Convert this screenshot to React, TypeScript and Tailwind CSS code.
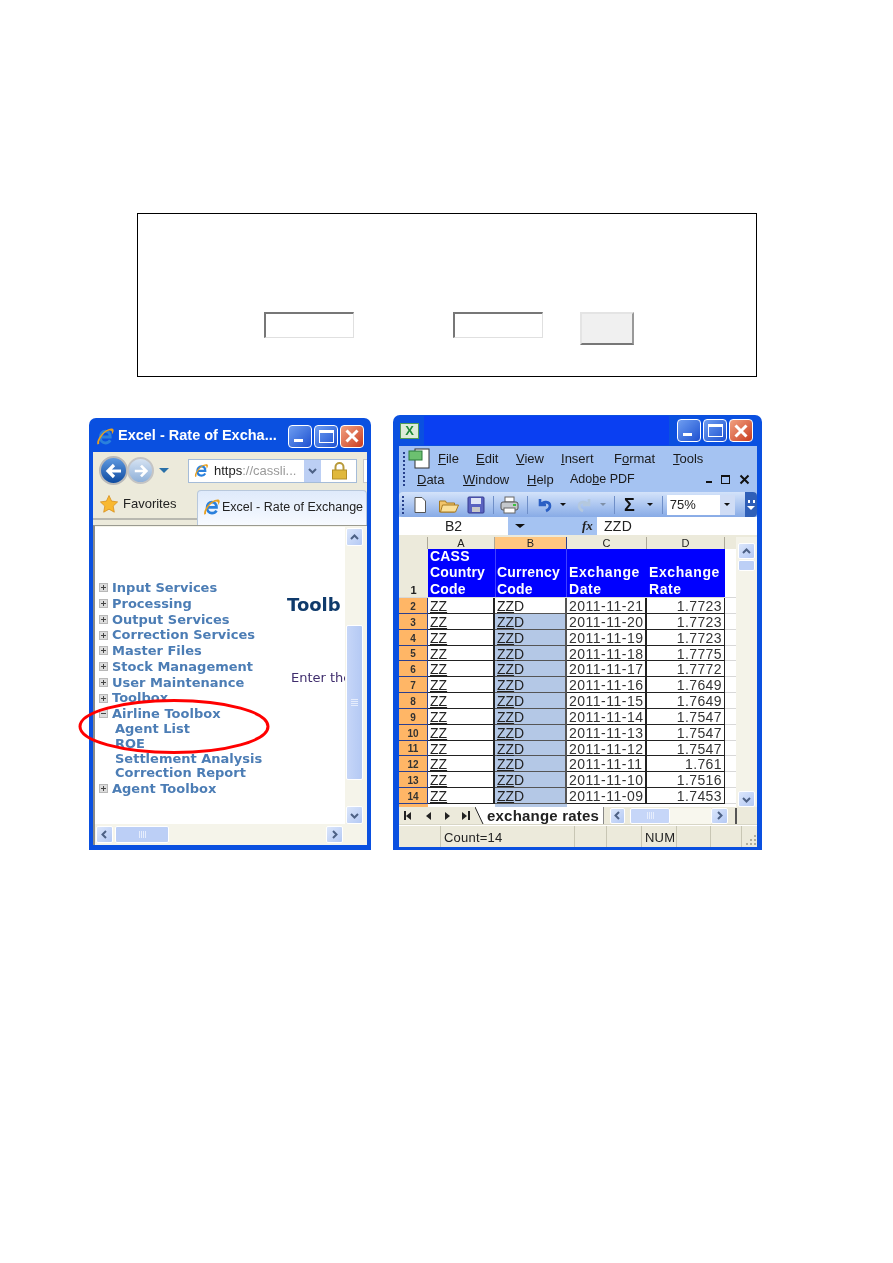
import React from 'react';

const ARIAL = "font-['Liberation_Sans',Arial,sans-serif]";
const DEJAVU = "font-['DejaVu_Sans',Verdana,sans-serif]";

const WindowButtons = () => (
  <div className="flex gap-[2px]">
    <div className="w-[24px] h-[23px] rounded-[4px] border border-white bg-linear-to-br from-[#6f9df0] to-[#1f4fd0] flex items-end p-[5px]">
      <div className="w-[9px] h-[3px] bg-white" />
    </div>
    <div className="w-[24px] h-[23px] rounded-[4px] border border-white bg-linear-to-br from-[#6f9df0] to-[#1f4fd0] flex items-center justify-center">
      <div className="w-[15px] h-[13px] border border-white border-t-[3px]" />
    </div>
    <div className="w-[24px] h-[23px] rounded-[4px] border border-white bg-linear-to-br from-[#f0a080] to-[#c8381c] flex items-center justify-center">
      <svg width="16" height="16" viewBox="0 0 16 16">
        <path d="M2.5 2.5 13.5 13.5M13.5 2.5 2.5 13.5" stroke="#fff" strokeWidth="3" />
      </svg>
    </div>
  </div>
);

const IeLogo = ({ size = 18 }: { size?: number }) => (
  <svg width={size} height={size} viewBox="0 0 20 20" className="shrink-0">
    <path d="M5 10.5h10C15 6.5 12.6 4.5 10 4.5 6.8 4.5 4.5 7.2 4.5 10.8S6.8 16.8 10 16.8c2.2 0 3.9-1 5-2.8" fill="none" stroke="#2a80dc" strokeWidth="3" />
    <path d="M1.6 18.5C-.5 15 6 5 13 2.3c3.2-1.2 6-1 5.5 2-.2 1.3-1 2.6-1.9 3.7.5-2.6.2-4.2-1.9-4.2C9 3.8 2.3 14 3.4 17.6Z" fill="#e8a020" />
  </svg>
);

const menu = ['Input Services', 'Processing', 'Output Services', 'Correction Services', 'Master Files', 'Stock Management', 'User Maintenance', 'Toolbox'];
const subMenu = ['Agent List', 'ROE', 'Settlement Analysis', 'Correction Report'];

const Expander = ({ open }: { open?: boolean }) => (
  <span className="w-[9px] h-[9px] mr-[4px] bg-[#dcdcdc] border border-[#b8b8b8] flex items-center justify-center shrink-0">
    <svg width="7" height="7" viewBox="0 0 7 7">
      <path d={open ? 'M1 3.5h5' : 'M1 3.5h5M3.5 1v5'} stroke="#444" strokeWidth="1" />
    </svg>
  </span>
);

const MenuRow = ({ label, open }: { label: string; open?: boolean }) => (
  <div className="h-[15.75px] flex items-center text-[13px] font-bold text-[#4c7db5] whitespace-nowrap pl-[4px]">
    <Expander open={open} />
    {label}
  </div>
);

const Chevron = ({ dir }: { dir: 'up' | 'down' | 'left' | 'right' }) => {
  const d = {
    up: 'M2 7l3.5-3.5L9 7',
    down: 'M2 4l3.5 3.5L9 4',
    left: 'M7 2 3.5 5.5 7 9',
    right: 'M4 2l3.5 3.5L4 9',
  }[dir];
  return (
    <svg width="11" height="11" viewBox="0 0 11 11">
      <path d={d} fill="none" stroke="#4d6185" strokeWidth="2" />
    </svg>
  );
};

const ScrollBtn = ({ dir, className }: { dir: 'up' | 'down' | 'left' | 'right'; className: string }) => (
  <div className={`${className} shrink-0 rounded-[2px] border border-white bg-linear-to-br from-[#dbe6fb] to-[#b4c9f4] flex items-center justify-center`}>
    <Chevron dir={dir} />
  </div>
);

const ThumbLines = ({ vertical }: { vertical?: boolean }) => (
  <div className={vertical ? 'flex gap-[1px]' : 'flex flex-col gap-[1px]'}>
    {[0, 1, 2, 3].map((i) => (
      <div key={i} className={vertical ? 'w-px h-[7px] bg-[#e6edfc]' : 'w-[7px] h-px bg-[#e6edfc]'} />
    ))}
  </div>
);

const BrowserWindow = () => (
  <div className={`relative w-[282px] h-[432px] shrink-0 ${ARIAL}`}>
    <div className="w-full h-full flex flex-col rounded-t-[7px] bg-[#0a50e0] px-[4px] pb-[5px] overflow-hidden blur-[0.35px]">
      {/* title bar */}
      <div className="h-[34px] shrink-0 flex items-center text-white pr-[3px] pt-[2px]">
        <div className="pl-[3px] pr-[3px] flex"><IeLogo size={19} /></div>
        <span className="text-[14.5px] font-bold whitespace-nowrap flex-1">Excel - Rate of Excha...</span>
        <WindowButtons />
      </div>
      {/* nav row */}
      <div className="h-[37px] shrink-0 bg-[#eceadb] flex items-center pl-[6px] overflow-hidden">
        <div className="w-[29px] h-[29px] shrink-0 rounded-full bg-linear-to-b from-[#5f9ae0] to-[#0b4aa0] border-2 border-[#b9b9b9] flex items-center justify-center">
          <svg width="18" height="18" viewBox="0 0 18 18"><path d="M9 3 3 9l6 6M3.5 9H16" fill="none" stroke="#fff" strokeWidth="3.2" /></svg>
        </div>
        <div className="w-[27px] h-[27px] shrink-0 -ml-[1px] rounded-full bg-linear-to-b from-[#d5e2f2] to-[#8fb0d8] border-2 border-[#c4c4c4] flex items-center justify-center">
          <svg width="16" height="16" viewBox="0 0 18 18"><path d="M9 3l6 6-6 6M14.5 9H2" fill="none" stroke="#fff" strokeWidth="3" /></svg>
        </div>
        <div className="ml-[5px] w-0 h-0 border-x-[5px] border-x-transparent border-t-[5px] border-t-[#2a70a8]" />
        <div className="ml-[19px] w-[169px] h-[24px] shrink-0 flex items-center bg-white border border-[#a5bcd8]">
          <div className="w-[25px] flex justify-center"><IeLogo size={15} /></div>
          <span className="text-[13px] text-[#222] whitespace-nowrap">https<span className="text-[#999]">://cassli...</span></span>
          <div className="ml-auto mr-[35px] w-[17px] h-[22px] bg-[#bccff4] flex items-center justify-center"><Chevron dir="down" /></div>
        </div>
        <div className="-ml-[27px] shrink-0">
          <svg width="19" height="19" viewBox="0 0 19 19">
            <path d="M5.5 9V6a4 4 0 0 1 8 0v3" fill="none" stroke="#b89a3a" strokeWidth="2" />
            <rect x="2.5" y="9" width="14" height="9" fill="#e0b83c" stroke="#b48f28" />
          </svg>
        </div>
        <div className="ml-[14px] w-[8px] h-[24px] bg-white border border-[#c8c8c8] shrink-0" />
      </div>
      {/* favorites row */}
      <div className="h-[36px] shrink-0 bg-[#eceadb] flex items-start">
        <div className="w-[104px] h-[31px] flex items-center pl-[6px] border-b-2 border-[#b8b8b0]">
          <svg width="20" height="20" viewBox="0 0 20 20" className="mr-[4px]">
            <path d="M10 1.5l2.6 5.6 6 .8-4.4 4.2 1.1 6.1L10 15.2l-5.3 3 1.1-6.1L1.4 7.9l6-.8Z" fill="#f8b830" stroke="#d89020" strokeWidth="0.8" />
          </svg>
          <span className="text-[13px] text-[#222]">Favorites</span>
        </div>
        <div className="flex-1 min-w-0 h-[36px] mt-[1px] flex items-center pl-[5px] pb-[3px] rounded-t-[4px] border border-b-0 border-[#b8c8dc] bg-linear-to-b from-[#dfeafb] to-[#f8fbff] overflow-hidden">
          <IeLogo size={18} />
          <span className="ml-[1px] text-[12.5px] text-[#222] whitespace-nowrap">Excel - Rate of Exchange .</span>
        </div>
      </div>
      {/* page + scrollbars */}
      <div className="flex-1 min-h-0 flex flex-col border-t border-[#9a9a90] border-l-2 border-l-[#8c8c88] bg-[#f5f4ea]">
        <div className="flex-1 min-h-0 flex mt-[1px]">
          <div className={`w-[250px] flex bg-white overflow-hidden ${DEJAVU}`}>
            <div className="w-[192px] shrink-0 pt-[53px]">
              {menu.map((m) => <MenuRow key={m} label={m} />)}
              <MenuRow label="Airline Toolbox" open />
              {subMenu.map((s) => (
                <div key={s} className="h-[14.7px] flex items-center pl-[20px] text-[13px] font-bold text-[#4c7db5] whitespace-nowrap">{s}</div>
              ))}
              <MenuRow label="Agent Toolbox" />
            </div>
            <div className="pt-[67px] whitespace-nowrap">
              <div className="text-[18px] leading-[22px] font-bold text-[#0f3a6b]">Toolb</div>
              <div className="mt-[54px] ml-[4px] text-[13px] leading-[16px] text-[#3f2d6d]">Enter the</div>
            </div>
          </div>
          <div className="w-[19px] flex flex-col items-center pt-[1px]">
            <ScrollBtn dir="up" className="w-[17px] h-[18px]" />
            <div className="mt-[79px] w-[17px] flex-1 rounded-[2px] border border-white bg-linear-to-r from-[#c6d6f8] to-[#b4c9f4] flex items-center justify-center">
              <ThumbLines />
            </div>
            <div className="h-[26px]" />
            <ScrollBtn dir="down" className="w-[17px] h-[18px]" />
          </div>
        </div>
        <div className="h-[21px] shrink-0 flex items-center pl-[1px]">
          <ScrollBtn dir="left" className="w-[17px] h-[17px]" />
          <div className="ml-[2px] w-[54px] h-[17px] rounded-[2px] border border-white bg-[#bccff6] flex items-center justify-center">
            <ThumbLines vertical />
          </div>
          <div className="w-[157px]" />
          <ScrollBtn dir="right" className="w-[17px] h-[17px]" />
        </div>
      </div>
    </div>
    {/* red highlight round the Airline Toolbox entries */}
    <svg className="absolute left-[-11px] top-[280px] blur-[0.3px]" width="194" height="58" viewBox="0 0 194 58">
      <ellipse cx="96" cy="28.5" rx="94" ry="26" fill="none" stroke="#f00" strokeWidth="3" />
    </svg>
  </div>
);

const U = ({ children }: { children: React.ReactNode }) => <span className="underline">{children}</span>;

const Grip = ({ className }: { className: string }) => (
  <div className={`${className} shrink-0 border-l-2 border-dotted border-[#27408b]`} />
);

const SmallDrop = ({ className }: { className: string }) => (
  <div className={`${className} w-0 h-0 border-x-[3px] border-x-transparent border-t-[3px]`} />
);

const rows = [
  ['2', '2011-11-21', '1.7723'],
  ['3', '2011-11-20', '1.7723'],
  ['4', '2011-11-19', '1.7723'],
  ['5', '2011-11-18', '1.7775'],
  ['6', '2011-11-17', '1.7772'],
  ['7', '2011-11-16', '1.7649'],
  ['8', '2011-11-15', '1.7649'],
  ['9', '2011-11-14', '1.7547'],
  ['10', '2011-11-13', '1.7547'],
  ['11', '2011-11-12', '1.7547'],
  ['12', '2011-11-11', '1.761'],
  ['13', '2011-11-10', '1.7516'],
  ['14', '2011-11-09', '1.7453'],
];

const ExcelWindow = () => (
  <div className={`w-[369px] h-[435px] shrink-0 flex flex-col rounded-t-[7px] bg-[#0a50e0] pl-[6px] pr-[5px] pb-[3px] overflow-hidden blur-[0.35px] ${ARIAL}`}>
    {/* title bar */}
    <div className="h-[31px] shrink-0 flex items-center">
      <div className="ml-[1px] w-[19px] h-[16px] bg-[#dcebd8] border border-[#4f9a55] flex items-center justify-center">
        <span className="text-[13px] leading-none font-bold text-[#1f8a3a]">X</span>
      </div>
      <div className="ml-[5px] w-[245px] h-[29px] bg-[#0a3ff2]" />
      <div className="ml-[8px]"><WindowButtons /></div>
    </div>
    {/* menus */}
    <div className="h-[46px] shrink-0 bg-[#a5c3f2] text-[13px] text-[#1a1a1a] flex">
      <Grip className="ml-[4px] mt-[6px] h-[34px]" />
      <div className="flex-1 min-w-0 -ml-[6px]">
        <div className="h-[25px] flex items-center pl-[8px]">
          <svg width="25" height="22" viewBox="0 0 25 22" className="mr-[6px] shrink-0">
            <rect x="8" y="1" width="14" height="19" fill="#fff" stroke="#333" />
            <rect x="2" y="3" width="13" height="9" fill="#6cc070" stroke="#2a7a3a" />
          </svg>
          <span className="w-[38px]"><U>F</U>ile</span>
          <span className="w-[40px]"><U>E</U>dit</span>
          <span className="w-[45px]"><U>V</U>iew</span>
          <span className="w-[53px]"><U>I</U>nsert</span>
          <span className="w-[59px]">F<U>o</U>rmat</span>
          <span><U>T</U>ools</span>
        </div>
        <div className="h-[17px] flex items-center pl-[18px]">
          <span className="w-[46px]"><U>D</U>ata</span>
          <span className="w-[64px]"><U>W</U>indow</span>
          <span className="w-[43px]"><U>H</U>elp</span>
          <span className="text-[12.5px]">Ado<U>b</U>e PDF</span>
          <div className="ml-auto mr-[7px] flex items-center gap-[9px]">
            <div className="w-[6px] h-[2px] bg-[#111] mt-[5px]" />
            <div className="w-[9px] h-[9px] border border-[#111] border-t-2" />
            <svg width="11" height="11" viewBox="0 0 11 11"><path d="M1.5 1.5l8 8M9.5 1.5l-8 8" stroke="#111" strokeWidth="2" /></svg>
          </div>
        </div>
      </div>
    </div>
    {/* toolbar */}
    <div className="h-[25px] shrink-0 bg-[#a5c3f2] flex">
      <div className="flex-1 rounded-[4px] bg-linear-to-b from-[#d4e3fa] to-[#88abe6] flex items-center pl-[3px] overflow-hidden">
        <Grip className="w-[3px] h-[18px]" />
        <svg width="18" height="18" viewBox="0 0 18 18" className="ml-[6px] shrink-0"><path d="M4 1.5h7l3.5 3.5v11.5H4Z" fill="#fff" stroke="#555" /></svg>
        <svg width="22" height="18" viewBox="0 0 22 18" className="ml-[9px] shrink-0"><path d="M1.5 5h6l1 2h8v9h-15Z" fill="#f2c46a" stroke="#a87a20" /><path d="M4.5 9h16l-3 7h-15Z" fill="#fbe09a" stroke="#a87a20" /></svg>
        <svg width="18" height="18" viewBox="0 0 18 18" className="ml-[7px] shrink-0"><rect x="1" y="1" width="16" height="16" rx="1" fill="#5a62c0" stroke="#363c90" /><rect x="4" y="2" width="10" height="6" fill="#dfe4f6" /><rect x="5" y="11" width="8" height="5" fill="#c8c8c8" /></svg>
        <div className="w-px h-[18px] bg-[#6f8fc8] ml-[8px] mr-[6px] shrink-0" />
        <svg width="19" height="18" viewBox="0 0 19 18" className="shrink-0"><rect x="5" y="1" width="9" height="5" fill="#fff" stroke="#666" /><rect x="1" y="6" width="17" height="8" rx="2" fill="#c4c8cc" stroke="#555" /><rect x="4" y="12" width="11" height="5" fill="#fff" stroke="#666" /><rect x="13" y="8" width="3" height="2" fill="#3ac040" /></svg>
        <div className="w-px h-[18px] bg-[#6f8fc8] ml-[8px] shrink-0" />
        <svg width="18" height="18" viewBox="0 0 18 18" className="ml-[8px] shrink-0"><path d="M4 3v6h6M4.5 9C7 5 14 5 14 10c0 3-2 4-4 5" fill="none" stroke="#2b5fc4" strokeWidth="2.6" /></svg>
        <SmallDrop className="ml-[6px] border-t-[#111]" />
        <svg width="18" height="18" viewBox="0 0 18 18" className="ml-[9px] shrink-0"><path d="M14 3v6H8M13.5 9C11 5 4 5 4 10c0 3 2 4 4 5" fill="none" stroke="#b4c8de" strokeWidth="2.6" /></svg>
        <SmallDrop className="ml-[7px] border-t-[#7f90a8]" />
        <div className="w-px h-[18px] bg-[#6f8fc8] ml-[8px] shrink-0" />
        <span className="ml-[9px] text-[18px] leading-none font-bold text-[#111]">Σ</span>
        <SmallDrop className="ml-[12px] border-t-[#111]" />
        <div className="w-px h-[18px] bg-[#6f8fc8] ml-[9px] shrink-0" />
        <div className="ml-[4px] w-[68px] h-[20px] bg-white flex items-center text-[13px] text-[#222] pl-[3px] shrink-0">
          75%
          <div className="ml-auto w-[15px] h-full bg-[#cfdcf5] flex items-center justify-center">
            <SmallDrop className="border-t-[#111]" />
          </div>
        </div>
        <div className="ml-auto w-[12px] h-full bg-[#2f5fb8] flex flex-col items-center justify-center gap-[3px] shrink-0">
          <div className="w-[7px] h-[3px] border-x-2 border-[#fff]" />
          <div className="w-0 h-0 border-x-[4px] border-x-transparent border-t-[4px] border-t-white" />
        </div>
      </div>
    </div>
    {/* formula bar */}
    <div className="h-[18px] shrink-0 bg-[#a5c3f2] flex items-center text-[14px] text-[#222]">
      <div className="w-[109px] h-full bg-white text-center leading-[18px]">B2</div>
      <div className="ml-[7px] w-0 h-0 border-x-[5px] border-x-transparent border-t-[4px] border-t-[#111]" />
      <span className="ml-[57px] w-[15px] italic font-bold font-['Liberation_Serif',serif] text-[13px]">fx</span>
      <div className="flex-1 h-full bg-white pl-[7px] leading-[18px] tracking-[0.3px]">ZZD</div>
    </div>
    {/* sheet */}
    <div className="flex-1 min-h-0 bg-[#eceadb] flex flex-col pt-[2px]">
      <div className="flex-1 min-h-0 flex">
        <div className="flex-1 min-w-0 bg-white flex flex-col overflow-hidden">
          <div className="h-[12px] shrink-0 flex text-[11px] leading-[12px] text-center text-[#222] bg-[#eceadb]">
            <div className="w-[29px] border-r border-[#aca899]" />
            <div className="w-[67px] border-r border-[#aca899]">A</div>
            <div className="w-[72px] bg-[#ffc680] border-r border-[#2b3f8f]">B</div>
            <div className="w-[80px] border-r border-[#aca899]">C</div>
            <div className="w-[78px] border-r border-[#aca899]">D</div>
            <div className="flex-1" />
          </div>
          {/* header row */}
          <div className="h-[49px] shrink-0 flex text-[14px] leading-[16.5px] font-bold text-white border-b border-[#d8d8d8]">
            <div className="w-[29px] bg-[#eceadb] flex items-end justify-center text-[11px] text-[#222] leading-[14px]">1</div>
            <div className="w-[67px] bg-[#0000ff] flex items-end pl-[2px] tracking-[0.2px]"><span>CASS<br />Country<br />Code</span></div>
            <div className="w-[72px] bg-[#0000ff] border-x border-[#4040ff] flex items-end pl-[1px] tracking-[0.2px]"><span>Currency<br />Code</span></div>
            <div className="w-[80px] bg-[#0000ff] flex items-end pl-[2px] tracking-[0.6px]"><span>Exchange<br />Date</span></div>
            <div className="w-[78px] bg-[#0000ff] flex items-end pl-[2px] tracking-[0.6px]"><span>Exchange<br />Rate</span></div>
          </div>
          {/* data rows */}
          <div className="h-[206px] shrink-0 flex flex-col">
            {rows.map(([n, date, rate], i) => (
              <div key={n} className="flex-1 min-h-0 flex text-[14px] tracking-[0.4px] text-[#222] leading-[17px]">
                <div className="w-[29px] bg-[#ffb666] border-r border-[#2b3f8f] border-b border-b-[#2b3f8f] text-center text-[10px] leading-[13px] tracking-normal font-bold text-[#333] flex items-end justify-center">{n}</div>
                <div className="w-[67px] border-r-2 border-b border-[#222] pl-[2px] tracking-normal"><span className="underline">ZZ</span></div>
                <div className={`w-[72px] border-r-2 border-b border-[#555] pl-[2px] tracking-normal ${i === 0 ? 'bg-white' : 'bg-[#b4c8e6]'}`}><span className="underline">ZZ</span>D</div>
                <div className="w-[80px] border-r-2 border-b border-[#222] pl-[2px] whitespace-nowrap tracking-[0.5px] text-[#333]">{date}</div>
                <div className="w-[78px] border-r border-b border-[#222] pr-[2px] text-right text-[#333]">{rate}</div>
                <div className="flex-1 border-b border-[#d8d8d8]" />
              </div>
            ))}
          </div>
          <div className="flex-1 flex">
            <div className="w-[29px] bg-[#ffb666]" />
            <div className="w-[67px]" />
            <div className="w-[72px] bg-[#b4c8e6]" />
          </div>
        </div>
        <div className="w-[21px] shrink-0 flex flex-col items-center bg-[#f4f3e9] pt-[6px]">
          <ScrollBtn dir="up" className="w-[17px] h-[16px]" />
          <div className="mt-[1px] w-[17px] h-[11px] rounded-[2px] border border-white bg-[#bccff6]" />
          <div className="flex-1" />
          <ScrollBtn dir="down" className="w-[17px] h-[16px]" />
        </div>
      </div>
      {/* sheet tabs */}
      <div className="h-[18px] shrink-0 flex items-center bg-[#eceadb] border-b border-[#d8d6c6]">
        <div className="w-[76px] shrink-0 pl-[5px] flex items-center gap-[10px]">
          <span className="w-[8px] h-[9px] border-l-2 border-[#222] flex items-center"><span className="w-0 h-0 border-y-[4px] border-y-transparent border-r-[5px] border-r-[#222]" /></span>
          <span className="w-0 h-0 ml-[4px] border-y-[4px] border-y-transparent border-r-[5px] border-r-[#222]" />
          <span className="w-0 h-0 ml-[4px] border-y-[4px] border-y-transparent border-l-[5px] border-l-[#222]" />
          <span className="w-[8px] h-[9px] ml-[2px] border-r-2 border-[#222] flex items-center"><span className="w-0 h-0 border-y-[4px] border-y-transparent border-l-[5px] border-l-[#222]" /></span>
        </div>
        <svg width="12" height="18" viewBox="0 0 12 18" className="shrink-0">
          <path d="M0 0 L8 17 H12 V0 Z" fill="#fff" />
          <path d="M0 0 L8 17" stroke="#222" strokeWidth="1" fill="none" />
        </svg>
        <div className="w-[117px] h-full shrink-0 bg-white text-[15px] leading-[17px] font-bold text-[#222] tracking-[0.2px] whitespace-nowrap border-r border-[#888]">exchange rates</div>
        <ScrollBtn dir="left" className="ml-[6px] w-[15px] h-[16px]" />
        <div className="ml-[5px] w-[40px] h-[16px] rounded-[2px] border border-white bg-[#c6d6f8] flex items-center justify-center">
          <ThumbLines vertical />
        </div>
        <div className="w-[41px] h-[16px] bg-[#f8f7ee]" />
        <ScrollBtn dir="right" className="w-[17px] h-[16px]" />
        <div className="ml-[7px] w-[2px] h-[16px] bg-[#555]" />
      </div>
      {/* status bar */}
      <div className="h-[22px] shrink-0 flex text-[13px] text-[#222] leading-[23px] tracking-[0.2px] border-t border-white relative">
        {[
          ['w-[42px]', ''],
          ['w-[134px]', 'Count=14'],
          ['w-[32px]', ''],
          ['w-[35px]', ''],
          ['w-[35px]', 'NUM'],
          ['w-[34px]', ''],
          ['w-[31px]', ''],
        ].map(([w, t], i) => (
          <div key={i} className={`${w} border-r border-[#c8c6b4] pl-[3px]`}>{t}</div>
        ))}
        <svg width="12" height="12" viewBox="0 0 12 12" className="ml-auto mt-[8px] shrink-0">
          <path d="M9 1h2v2H9zM5 5h2v2H5zM9 5h2v2H9zM1 9h2v2H1zM5 9h2v2H5zM9 9h2v2H9z" fill="#b0ae9c" />
        </svg>
      </div>
    </div>
  </div>
);

const App: React.FC = () => {
  return (
    <div className="w-[893px] h-[1263px] bg-white overflow-hidden pt-[213px]">
      {/* form box, labels blank in the original */}
      <div className="ml-[137px] w-[620px] h-[164px] border border-black pt-[98px] pl-[126px] flex items-start">
        <div className="w-[90px] h-[26px] border border-[#e0e0e0] border-t-2 border-l-2 border-t-[#777] border-l-[#777]" />
        <div className="ml-[99px] w-[90px] h-[26px] border border-[#e0e0e0] border-t-2 border-l-2 border-t-[#777] border-l-[#777]" />
        <div className="ml-[37px] w-[54px] h-[33px] bg-[#f0f0f0] border-2 border-[#f0f0f0] border-t-[#e4e4e4] border-l-[#e4e4e4] border-r-[#999] border-b-[#777]" />
      </div>
      <div className="mt-[38px] ml-[89px] flex items-end gap-[22px]">
        <BrowserWindow />
        <ExcelWindow />
      </div>
    </div>
  );
};

export default App;
